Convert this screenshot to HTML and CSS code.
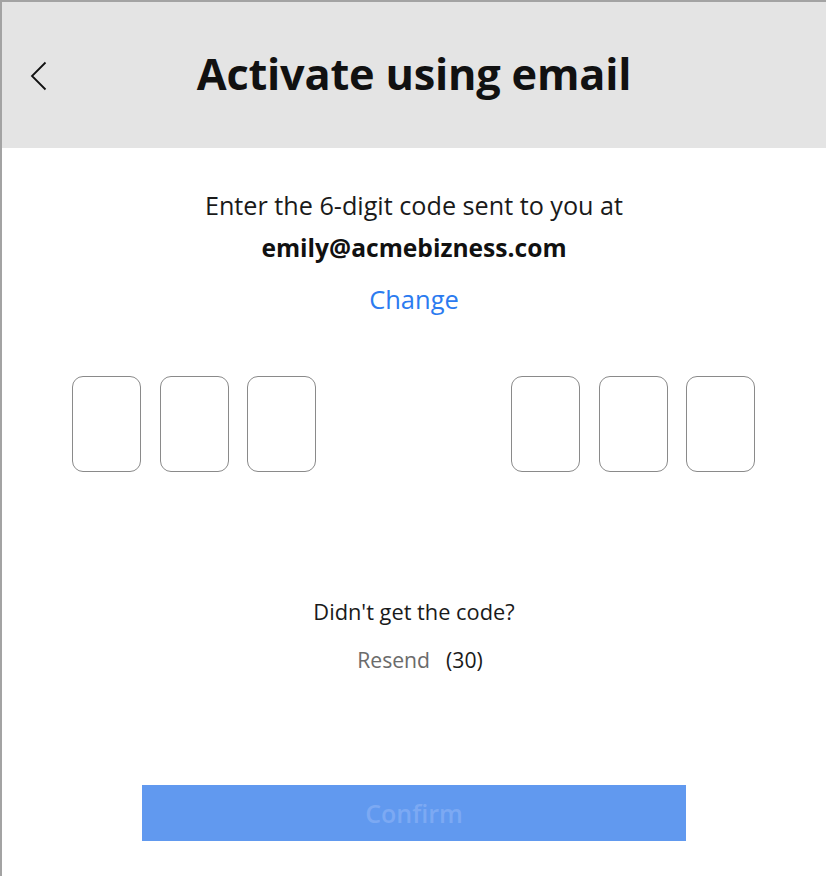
FILE: index.html
```html
<!DOCTYPE html>
<html lang="en">
<head>
<meta charset="utf-8">
<title>Activate using email</title>
<link rel="stylesheet" href="styles.css">
</head>
<body>
<div class="frame">
  <header class="header">
    <button class="back" aria-label="Back">
      <svg width="18" height="30" viewBox="0 0 18 30"><path d="M15.5 1.5 L2 15 L15.5 28.5" fill="none" stroke="#111" stroke-width="1.8"/></svg>
    </button>
    <h1 class="title">Activate using email</h1>
  </header>
  <main class="content">
    <p class="lead">Enter the 6-digit code sent to you at</p>
    <p class="email">emily@acmebizness.com</p>
    <a class="change" href="#">Change</a>
    <div class="code">
      <div class="group">
        <div class="box"></div><div class="box"></div><div class="box"></div>
      </div>
      <div class="group">
        <div class="box"></div><div class="box"></div><div class="box"></div>
      </div>
    </div>
    <p class="question">Didn't get the code?</p>
    <p class="resend"><span class="resend-link">Resend</span><span class="count">(30)</span></p>
    <button class="confirm">Confirm</button>
  </main>
</div>
</body>
</html>
```
FILE: styles.css
```css
* { box-sizing: border-box; }
html, body { margin: 0; padding: 0; background: #fff; }
body { font-family: "Open Sans", "Noto Sans", sans-serif; color: #111; }
.frame {
  width: 826px;
  height: 876px;
  border-left: 2px solid #a3a3a3;
  border-top: 2px solid #a3a3a3;
  overflow: hidden;
}
.header {
  height: 146px;
  background: #e4e4e4;
  display: flex;
  align-items: center;
  justify-content: center;
  position: relative;
}
.back {
  position: absolute;
  left: 28px;
  top: 59px;
  background: none;
  border: 0;
  padding: 0;
  line-height: 0;
}
.title {
  margin: 0;
  font-size: 43.3px;
  font-weight: 700;
  line-height: 50px;
  letter-spacing: -0.2px;
  padding-bottom: 2px;
}
.content {
  display: flex;
  flex-direction: column;
  align-items: center;
  padding-top: 41px;
}
.lead, .email, .question, .resend { margin: 0; }
.lead { font-size: 25.2px; line-height: 32px; color: #1a1a1a; }
.email { font-size: 24.6px; line-height: 32px; font-weight: 700; margin-top: 11px; }
.change {
  font-size: 25.5px;
  line-height: 32px;
  color: #2b7bf0;
  text-decoration: none;
  margin-top: 19px;
}
.code {
  display: flex;
  gap: 195px;
  margin-top: 61px;
  margin-left: -1px;
}
.group { display: flex; gap: 18.5px; }
.box {
  width: 69px;
  height: 96px;
  border: 1.5px solid #8a8a8a;
  border-radius: 11px;
}
.question { font-size: 21.8px; line-height: 28px; margin-top: 126px; color: #1a1a1a; }
.resend { font-size: 21.2px; line-height: 28px; margin-top: 20px; padding-left: 12px; }
.resend-link { color: #6b6b6b; margin-right: 16px; }
.count { color: #1a1a1a; }
.confirm {
  margin-top: 111px;
  width: 544px;
  height: 56px;
  background: #6199ef;
  border: 0;
  color: #7ca9f3;
  font-family: inherit;
  font-size: 25px;
  font-weight: 600;
}
```
